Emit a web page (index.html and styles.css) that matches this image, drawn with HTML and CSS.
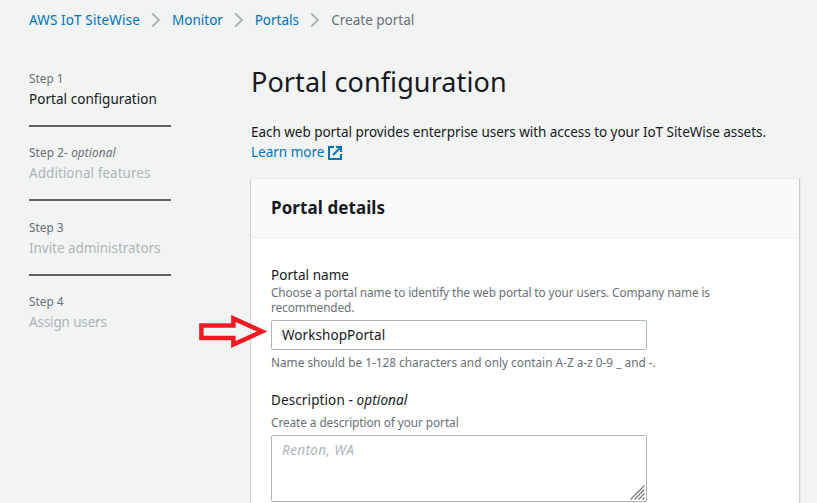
FILE: index.html
```
<!DOCTYPE html>
<html lang="en">
<head>
<meta charset="utf-8">
<title>Create portal</title>
<link rel="stylesheet" href="styles.css">
</head>
<body>
<nav class="breadcrumb">
  <a class="crumb-root">AWS IoT SiteWise</a>
  <svg class="chevron" viewBox="0 0 10 16"><path d="M1.2 1.5 8 8 1.2 14.5"/></svg>
  <a class="crumb-monitor">Monitor</a>
  <svg class="chevron" viewBox="0 0 10 16"><path d="M1.2 1.5 8 8 1.2 14.5"/></svg>
  <a class="crumb-portals">Portals</a>
  <svg class="chevron" viewBox="0 0 10 16"><path d="M1.2 1.5 8 8 1.2 14.5"/></svg>
  <span class="crumb-current">Create portal</span>
</nav>
<div class="layout">
  <ol class="steps">
    <li class="active"><small>Step 1</small><span class="t1">Portal configuration</span></li>
    <li><small class="s2">Step 2- <i>optional</i></small><span class="t2">Additional features</span></li>
    <li><small>Step 3</small><span class="t3">Invite administrators</span></li>
    <li><small>Step 4</small><span class="t4">Assign users</span></li>
  </ol>
  <main>
    <h1>Portal configuration</h1>
    <p class="intro">Each web portal provides enterprise users with access to your IoT SiteWise assets.</p>
    <a class="learn"><span>Learn more</span><svg viewBox="0 0 14 14"><path d="M6 1H1v12h12V8M8 1h5v5M13 1 5 9"/></svg></a>
    <section class="card">
      <header><h2>Portal details</h2></header>
      <div class="form">
        <label class="name-label">Portal name</label>
        <p class="hint name-hint">Choose a portal name to identify the web portal to your users. Company name is<br>recommended.</p>
        <div class="input"><span>WorkshopPortal</span>
          <svg class="arrow" viewBox="0 0 70 34"><path d="M3.4 10.5h32V3.4L64 16.5 35.4 29.5V23h-32z"/></svg>
        </div>
        <p class="hint rule">Name should be 1-128 characters and only contain A-Z a-z 0-9 _ and -.</p>
        <label class="desc-label">Description - <i>optional</i></label>
        <p class="hint desc-hint">Create a description of your portal</p>
        <div class="textarea"><span>Renton, WA</span>
          <svg class="grip" viewBox="0 0 15 15"><path d="M.5 14.5 14.5.5M4.5 14.5l10-10M8.5 14.5l6-6M12.5 14.5l2-2"/></svg>
        </div>
      </div>
    </section>
  </main>
</div>
</body>
</html>
```
FILE: styles.css
```
* { box-sizing: border-box; }
body {
  margin: 0;
  height: 503px;
  overflow: hidden;
  background: #f2f3f3;
  color: #16191f;
  font: 13.5px/20px "Noto Sans", sans-serif;
  white-space: nowrap;
}
h1, h2, p, ol { margin: 0; padding: 0; font-weight: 400; }
svg { fill: none; display: block; }
a { color: #0073bb; }
.breadcrumb { display: flex; align-items: center; height: 20px; margin: 10px 0 0 29px; color: #687078; }
.breadcrumb a, .breadcrumb span { flex: none; }
.crumb-root { width: 111.5px; letter-spacing: .13px; }
.crumb-monitor { width: 51px; }
.crumb-portals { width: 45px; }
.chevron { flex: none; width: 10px; height: 16px; margin: 0 10.8px; stroke: #aab7b8; stroke-width: 2; }
.layout { display: grid; grid-template-columns: 142px 549px; column-gap: 80px; height: 473px; margin-left: 29px; overflow: hidden; }
.steps { list-style: none; padding-top: 39px; }
.steps li { height: 74.4px; color: #aab7b8; }
.steps li.active { color: #16191f; }
.steps small { display: block; height: 20px; font-size: 11.8px; line-height: 19px; color: #687078; }
.steps .s2 { letter-spacing: .1px; }
.steps li > span { display: block; height: 20px; }
.steps li:not(:last-child)::after { content: ""; display: block; height: 2px; margin-top: 16px; background: #5f6162; }
.t1, .t2 { letter-spacing: .05px; }
.t3 { letter-spacing: -.04px; }
.t4 { letter-spacing: -.15px; }
main { padding-top: 34px; }
h1 { height: 36px; font-size: 27px; line-height: 36px; letter-spacing: .1px; }
.intro { margin-top: 22px; letter-spacing: -.035px; }
.learn { display: flex; align-items: center; height: 20px; color: #0073bb; }
.learn span { width: 77px; }
.learn svg { width: 14px; height: 14px; margin-top: 1px; stroke: #0073bb; stroke-width: 2; }
.card {
  height: 325px;
  margin-top: 16px;
  background: #fff;
  border-top: 1px solid #eaeded;
  border-right: 1px solid #c9cece;
  box-shadow: -1px 1px 0 #cdd2d2, 1px 1px 0 #e6e9e9;
}
.card header { height: 59px; padding: 15px 20px; border-bottom: 1px solid #eaeded; background: #fafafa; }
h2 { font-size: 17px; line-height: 28px; font-weight: 700; letter-spacing: .08px; }
.form { padding: 27px 20px 0; }
label { display: block; letter-spacing: .04px; }
.hint { color: #687078; font-size: 11.8px; line-height: 15px; }
.name-hint { letter-spacing: -.095px; }
.input, .textarea { position: relative; width: 376px; border: 1px solid #aab7b8; border-radius: 2px; padding: 0 10px; }
.input { height: 30px; margin-top: 5px; line-height: 29px; letter-spacing: .06px; }
.arrow { position: absolute; left: -74px; top: -6px; width: 70px; height: 34px; stroke: #ed1c24; stroke-width: 4.5; }
.rule { margin-top: 5px; letter-spacing: .01px; }
.desc-label { margin-top: 20px; letter-spacing: .11px; }
.desc-hint { margin-top: 5px; letter-spacing: -.07px; }
.textarea { height: 67px; margin-top: 5px; padding-top: 4px; color: #aab7b8; font-style: italic; letter-spacing: .4px; }
.grip { position: absolute; right: 1px; bottom: 1px; width: 15px; height: 15px; stroke: #777; stroke-width: 1.2; }
```
